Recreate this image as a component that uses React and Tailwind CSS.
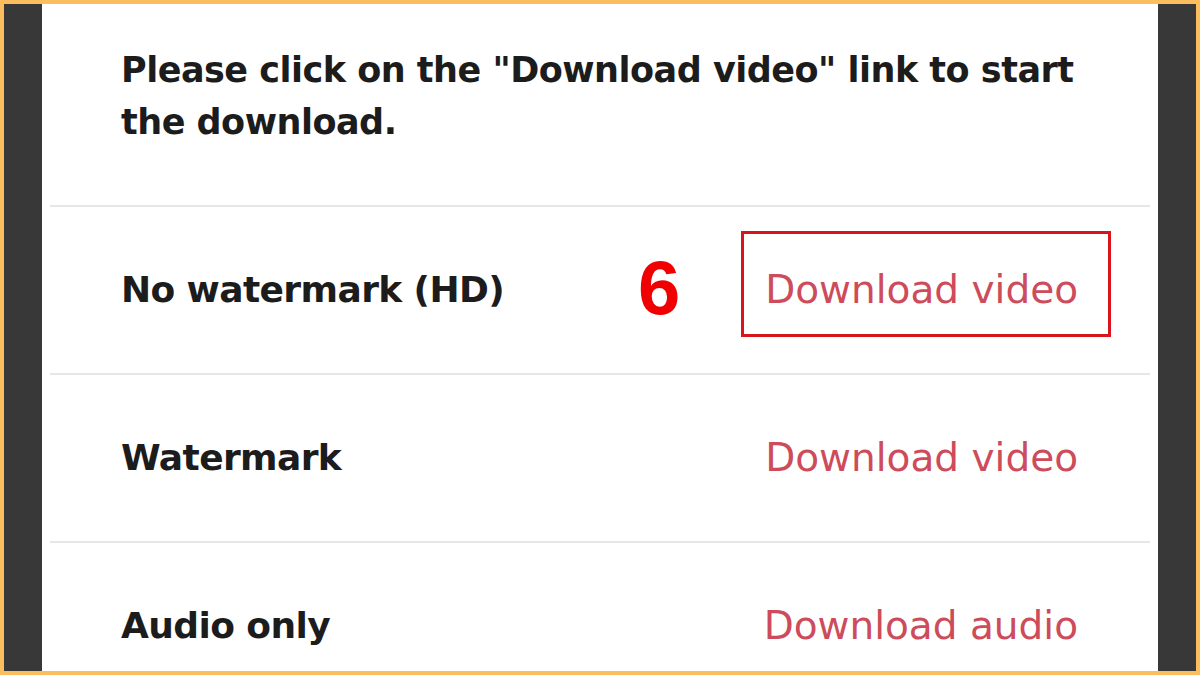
import React from 'react';

const rows = [
  { label: 'No watermark (HD)', action: 'Download video', marked: true },
  { label: 'Watermark', action: 'Download video' },
  { label: 'Audio only', action: 'Download audio' },
];

const font = { fontFamily: '"DejaVu Sans", "Open Sans", sans-serif' };

export default function App() {
  return (
    <div className="w-[1200px] h-[675px] overflow-hidden border-4 border-[#fbbd5e] bg-[#383838] px-[38px]" style={font}>
      <div className="h-full bg-white flex flex-col overflow-hidden">
        <div className="shrink-0 h-[201px] pl-[79px] pr-[40px] pt-[40px] text-[#1c1c1c]">
          <p className="w-[990px] text-[35px] leading-[52px] font-bold tracking-[-0.5px]">
            Please click on the "Download video" link to start the download.
          </p>
        </div>
        {rows.map((r) => (
          <div key={r.label} className="shrink-0">
            <div className="mx-[8px] h-[2px] bg-[#e6e6e6]" />
            <div className="h-[166px] flex items-center pl-[79px] pr-[80px]">
              <span className="text-[36px] font-bold tracking-[-0.6px] text-[#1c1c1c]">{r.label}</span>
              <div className="ml-auto flex items-center">
                {r.marked && (
                  <span
                    className="mr-[85px] -mt-[4px] text-[76px] font-bold text-[#f00000] leading-none"
                    style={{ fontFamily: '"Liberation Sans", Arial, sans-serif' }}
                  >
                    6
                  </span>
                )}
                <span className={r.marked ? 'relative' : ''}>
                  {r.marked && (
                    <span className="absolute -left-[24px] -right-[33px] -top-[30px] -bottom-[18px] border-[3px] border-[#d9151b]" />
                  )}
                  <span className="text-[39px] text-[#cd4b5a]">{r.action}</span>
                </span>
              </div>
            </div>
          </div>
        ))}
      </div>
    </div>
  );
}
